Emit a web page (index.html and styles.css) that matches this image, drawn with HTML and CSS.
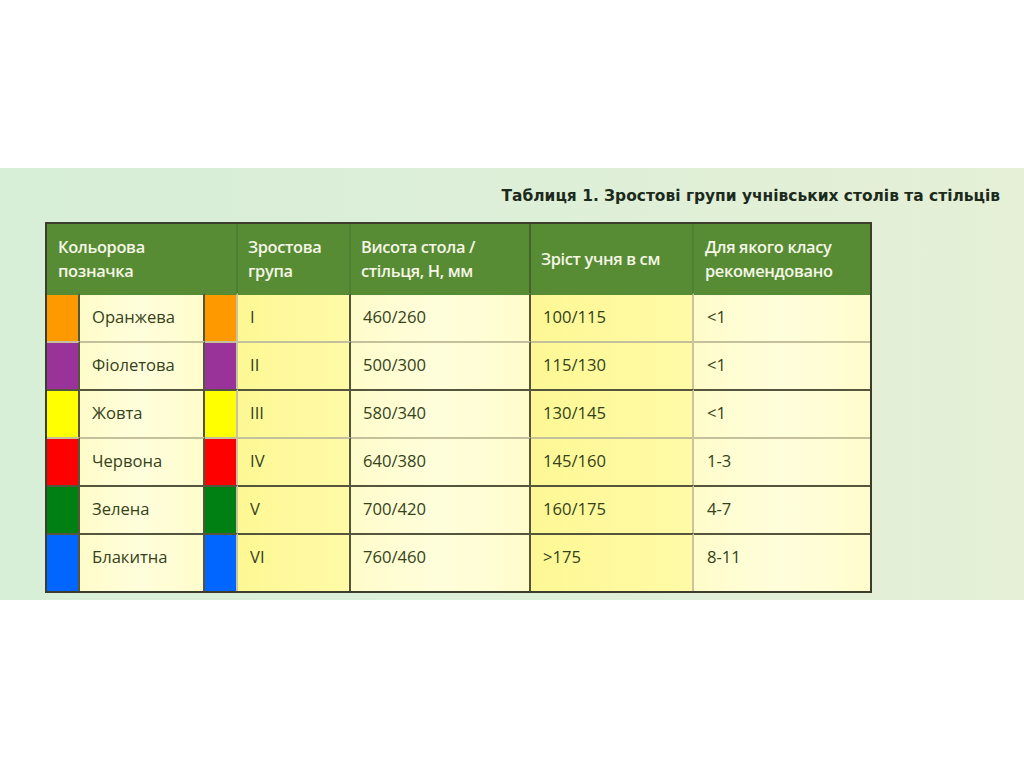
FILE: index.html
```html
<!DOCTYPE html>
<html lang="uk">
<head>
<meta charset="utf-8">
<title>Таблиця 1</title>
<link rel="stylesheet" href="styles.css">
</head>
<body>
<div class="top-space"></div>
<section class="band">
  <h2 class="caption">Таблиця 1. Зростові групи учнівських столів та стільців</h2>
  <div class="table">
    <div class="hcell span3">Кольорова<br>позначка</div>
    <div class="hcell sep-soft">Зростова<br>група</div>
    <div class="hcell">Висота стола /<br>стільця, H, мм</div>
    <div class="hcell sep-soft">Зріст учня в см</div>
    <div class="hcell last">Для якого класу<br>рекомендовано</div>

    <div class="cell sw orange first"></div>
    <div class="cell cream first">Оранжева</div>
    <div class="cell sw orange soft-r first"></div>
    <div class="cell yellow first">I</div>
    <div class="cell cream first">460/260</div>
    <div class="cell yellow soft-r first">100/115</div>
    <div class="cell cream last first">&lt;1</div>

    <div class="cell sw purple soft-t"></div>
    <div class="cell cream soft-t">Фіолетова</div>
    <div class="cell sw purple soft-r soft-t"></div>
    <div class="cell yellow soft-t">II</div>
    <div class="cell cream soft-t">500/300</div>
    <div class="cell yellow soft-r soft-t">115/130</div>
    <div class="cell cream last soft-t">&lt;1</div>

    <div class="cell sw lemon"></div>
    <div class="cell cream">Жовта</div>
    <div class="cell sw lemon soft-r"></div>
    <div class="cell yellow">III</div>
    <div class="cell cream">580/340</div>
    <div class="cell yellow soft-r">130/145</div>
    <div class="cell cream last">&lt;1</div>

    <div class="cell sw red soft-t"></div>
    <div class="cell cream soft-t">Червона</div>
    <div class="cell sw red soft-r soft-t"></div>
    <div class="cell yellow soft-t">IV</div>
    <div class="cell cream soft-t">640/380</div>
    <div class="cell yellow soft-r soft-t">145/160</div>
    <div class="cell cream last soft-t">1-3</div>

    <div class="cell sw green"></div>
    <div class="cell cream">Зелена</div>
    <div class="cell sw green soft-r"></div>
    <div class="cell yellow">V</div>
    <div class="cell cream">700/420</div>
    <div class="cell yellow soft-r">160/175</div>
    <div class="cell cream last">4-7</div>

    <div class="cell sw blue"></div>
    <div class="cell cream">Блакитна</div>
    <div class="cell sw blue soft-r"></div>
    <div class="cell yellow">VI</div>
    <div class="cell cream">760/460</div>
    <div class="cell yellow soft-r">&gt;175</div>
    <div class="cell cream last">8-11</div>
  </div>
</section>
</body>
</html>
```
FILE: styles.css
```css
html, body {
  margin: 0;
  padding: 0;
  background: #ffffff;
}
body {
  width: 1024px;
  height: 768px;
  overflow: hidden;
  font-family: "Open Sans", "Liberation Sans", sans-serif;
}
.top-space {
  height: 168px;
}
.band {
  height: 432px;
  box-sizing: border-box;
  padding: 17px 24px 0 45px;
  background: linear-gradient(90deg, #d7eed7 0%, #dcefd8 40%, #e5f0d6 100%);
}
.caption {
  margin: 0 0 15px 0;
  text-align: right;
  font-family: "DejaVu Sans", Verdana, sans-serif;
  font-weight: bold;
  font-size: 15.45px;
  line-height: 22px;
  color: #1c2a1c;
}
.table {
  width: 827px;
  box-sizing: border-box;
  border: 2px solid #3d3d2e;
  display: grid;
  grid-template-columns: 33px 125px 33px 113px 180px 163px 176px;
  grid-template-rows: 69px 48px 48px 48px 48px 48px 58px;
}
.hcell {
  background: #578c35;
  color: #f6f6e6;
  font-size: 16.4px;
  font-weight: 600;
  letter-spacing: -0.35px;
  line-height: 24px;
  padding: 0 4px 0 10px;
  display: flex;
  align-items: center;
  border-right: 2px solid #43632a;
  box-sizing: border-box;
}
.hcell.span3 {
  grid-column: span 3;
  border-right-color: #4d7d2f;
  padding-left: 11px;
}
.hcell.sep-soft {
  border-right-color: #4f8230;
}
.hcell.last {
  border-right: none;
  padding-left: 11px;
}
.cell {
  box-sizing: border-box;
  border-top: 2px solid #55553e;
  border-right: 2px solid #55553e;
  padding: 10px 6px 0 12px;
  font-size: 16.6px;
  line-height: 24px;
  color: #34421a;
}
.cell.first {
  border-top-color: #578c35;
}
.cell.soft-t {
  border-top-color: #c4c09c;
}
.cell.soft-r {
  border-right-color: #c9c59a;
}
.cell.last {
  border-right: none;
  padding-left: 13px;
}
.cream {
  background: linear-gradient(90deg, #fffcca 0%, #fffedc 50%, #fffccc 100%);
}
.yellow {
  background: linear-gradient(90deg, #fdf894 0%, #fff9a0 60%, #fffaa6 100%);
}
.sw { padding: 0; }
.orange { background: #ff9900; }
.purple { background: #993399; }
.lemon { background: #ffff00; }
.red { background: #ff0000; }
.green { background: #007f12; }
.blue { background: #0066ff; }
```
